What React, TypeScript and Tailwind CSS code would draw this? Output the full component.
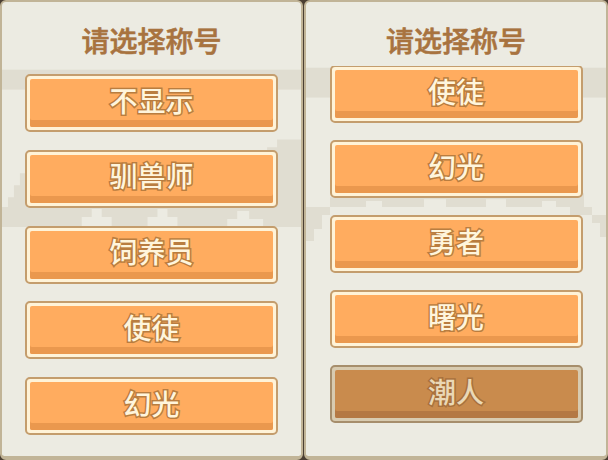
import React from "react";

const LEFT_TITLES = ["不显示", "驯兽师", "饲养员", "使徒", "幻光"];
const RIGHT_TITLES = ["使徒", "幻光", "勇者", "曙光", "潮人"];

function TitleButton({ label, dim }: { label: string; dim?: boolean }) {
  return (
    <div
      className={
        dim
          ? "w-[253px] h-[58px] shrink-0 mx-auto rounded-[5px] border-2 border-[#a68e6c] bg-[#d8cbb0] p-[3px]"
          : "w-[253px] h-[58px] shrink-0 mx-auto rounded-[5px] border-2 border-[#c49d6d] bg-[#fff3d8] p-[3px]"
      }
    >
      <div
        className={
          dim
            ? "h-full rounded-[2px] bg-[#c98b4d] shadow-[inset_0_-7px_0_#b47843] flex items-center justify-center pb-[7px]"
            : "h-full rounded-[2px] bg-[#ffac5f] shadow-[inset_0_-7px_0_#ea984e] flex items-center justify-center pb-[7px]"
        }
      >
        <span
          className={
            dim
              ? "text-[28px] leading-none font-medium text-[#ead8b6] [-webkit-text-stroke:3px_#a8713d] [paint-order:stroke_fill]"
              : "text-[28px] leading-none font-medium text-[#fff5dc] [-webkit-text-stroke:3px_#b97d40] [paint-order:stroke_fill]"
          }
        >
          {label}
        </span>
      </div>
    </div>
  );
}

// faint pixel skyline behind the list
function Backdrop({ right }: { right?: boolean }) {
  return (
    <svg className="absolute inset-0 w-full h-full" viewBox="0 0 300 456" preserveAspectRatio="none">
      {right ? (
        <g fill="#e0ddd1">
          <rect x="0" y="66" width="300" height="30" />
          <polygon points="0,240 8,240 8,228 16,228 16,214 24,214 24,196 60,196 60,186 240,186 240,192 278,192 278,206 286,206 286,222 294,222 294,236 300,236 300,214 264,214 264,206 250,206 250,200 236,200 236,206 200,206 200,198 180,198 180,206 140,206 140,198 118,198 118,206 76,206 76,200 60,200 60,206 0,206" />
        </g>
      ) : (
        <g fill="#e0ddd1">
          <rect x="0" y="68" width="300" height="20" />
          <polygon points="0,206 6,206 6,196 12,196 12,184 18,184 18,172 24,172 24,158 266,158 266,146 276,146 276,138 300,138 300,226 262,226 262,218 248,218 248,210 236,210 236,218 226,218 226,226 176,226 176,216 166,216 166,208 156,208 156,216 146,216 146,226 110,226 110,216 100,216 100,208 90,208 90,216 80,216 80,226 0,226" />
        </g>
      )}
    </svg>
  );
}

function Panel({ titles, right }: { titles: string[]; right?: boolean }) {
  return (
    <div
      className={
        right
          ? "relative w-[304px] h-full rounded-[6px] border-2 border-b-4 border-[#c1b497] bg-[#ecebe2] flex flex-col"
          : "relative w-[303px] h-full rounded-[6px] border-2 border-b-4 border-[#c1b497] bg-[#ecebe2] flex flex-col"
      }
    >
      <Backdrop right={right} />
      <div className="relative h-[64px] shrink-0 pt-[12px] flex items-center justify-center">
        <span className="text-[28px] leading-none font-medium text-[#a8733f] [-webkit-text-stroke:0.6px_#a8733f]">请选择称号</span>
      </div>
      <div className="relative flex-1 overflow-hidden">
        <div
          className={
            right
              ? "flex flex-col gap-[17px] -mt-[1px]"
              : "flex flex-col gap-[17.75px] pt-[8px]"
          }
        >
          {titles.map((t, i) => (
            <TitleButton key={t} label={t} dim={right && i === titles.length - 1} />
          ))}
        </div>
      </div>
    </div>
  );
}

export default function App() {
  return (
    <div className="w-[608px] h-[460px] bg-[#4b3f33] flex gap-[1px] overflow-hidden font-['Noto_Sans_CJK_SC','Noto_Sans',sans-serif]">
      <Panel titles={LEFT_TITLES} />
      <Panel titles={RIGHT_TITLES} right />
    </div>
  );
}
